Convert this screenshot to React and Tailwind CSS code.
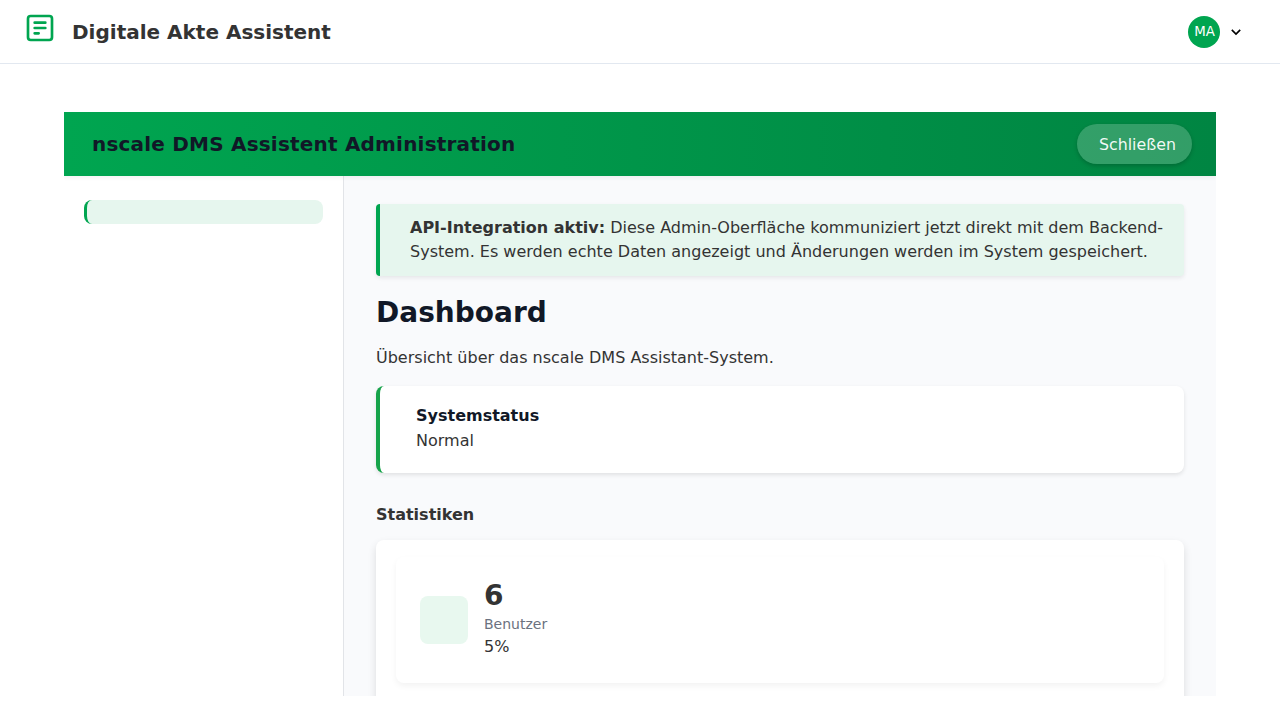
import React from 'react';

function LogoIcon() {
  return (
    <svg
      className="-mt-2 h-8 w-8 shrink-0"
      viewBox="0 0 24 24"
      fill="none"
      stroke="#00a550"
      strokeWidth="2"
      strokeLinecap="round"
      strokeLinejoin="round"
    >
      <rect x="3" y="3" width="18" height="18" rx="2" />
      <path d="M8 8h8M8 12h8M8 16h3" />
    </svg>
  );
}

function TopBar() {
  return (
    <header className="flex h-16 shrink-0 items-center justify-between border-b border-[#e2e8f0] bg-white px-6">
      <div className="flex items-center gap-4">
        <LogoIcon />
        <h1 className="text-xl font-semibold leading-7">Digitale Akte Assistent</h1>
      </div>
      <button className="flex items-center gap-2 pr-3">
        <span className="flex h-8 w-8 items-center justify-center rounded-full bg-[#00a550] pl-px text-[13.333px] text-white">
          MA
        </span>
        <svg
          className="h-4 w-4"
          viewBox="0 0 24 24"
          fill="none"
          stroke="#000000"
          strokeWidth="2.5"
          strokeLinecap="butt"
          strokeLinejoin="miter"
        >
          <path d="m5.7 8.9 6.3 6.1 6.3-6.1" />
        </svg>
      </button>
    </header>
  );
}

function AdminHeader() {
  return (
    <div className="relative z-10 flex h-16 shrink-0 items-center justify-between bg-linear-90 from-[#00a550] to-[#008542] pl-7 pr-6 shadow-[0_2px_4px_rgba(0,0,0,0.05)]">
      <h2 className="text-xl font-semibold tracking-[0.2px] text-[#111827]">nscale DMS Assistent Administration</h2>
      <button className="flex h-10 w-[115px] items-center rounded-full bg-white/20 pl-[22px] pt-px text-[15.8px] text-white/95 shadow-[0_2px_4px_rgba(0,0,0,0.2)]">
        Schließen
      </button>
    </div>
  );
}

function Sidebar() {
  return (
    <nav className="w-[280px] shrink-0 border-r border-[#e2e4e8] bg-white px-5 py-6">
      <div className="h-6 rounded-lg border-l-3 border-[#00a550] bg-[#e6f6ee]" />
    </nav>
  );
}

function Dashboard() {
  return (
    <main className="flex-1 overflow-hidden bg-[#f9fafc] px-8 pt-7">
      <div className="rounded border-l-4 border-[#00a550] bg-[#e6f6ee] py-3 pl-[30px] pr-4 shadow-[0_2px_4px_rgba(0,0,0,0.08)]">
        <strong className="font-bold">API-Integration aktiv:</strong> Diese Admin-Oberfläche kommuniziert jetzt
        direkt mit dem Backend-System. Es werden echte Daten angezeigt und Änderungen werden im System gespeichert.
      </div>
      <h2 className="mt-[17px] text-[28px] font-semibold leading-[39px] text-[#111827]">Dashboard</h2>
      <p className="mt-3.5">Übersicht über das nscale DMS Assistant-System.</p>
      <section className="mt-4 h-[87px] rounded-lg border-l-4 border-[#16a34a] bg-white pl-9 pt-[18px] shadow-[0_2px_4px_rgba(0,0,0,0.1)]">
        <h3 className="font-semibold text-[#111827]">Systemstatus</h3>
        <p className="mt-px">Normal</p>
      </section>
      <h3 className="mt-[30px] font-semibold">Statistiken</h3>
      <section className="mt-[13px] h-[400px] rounded-lg bg-white p-5 pt-[17px] shadow-[0_4px_8px_rgba(0,0,0,0.12)]">
        <div className="flex h-[126px] items-center gap-4 rounded-lg px-6 shadow-[0_3px_6px_rgba(0,0,0,0.05)]">
          <div className="h-12 w-12 rounded-lg bg-[#e8f8ef]" />
          <div className="pb-0.5">
            <div className="text-[28px] font-bold leading-[34px]">6</div>
            <div className="mt-px text-sm leading-[21px] text-[#6b7280]">Benutzer</div>
            <div>5%</div>
          </div>
        </div>
      </section>
    </main>
  );
}

export default function App() {
  return (
    <div className="flex h-screen flex-col bg-white font-['DejaVu_Sans',sans-serif] text-base text-[#333333]">
      <TopBar />
      <div className="mx-16 mb-6 mt-12 flex min-h-0 flex-1 flex-col overflow-hidden">
        <AdminHeader />
        <div className="flex min-h-0 flex-1">
          <Sidebar />
          <Dashboard />
        </div>
      </div>
    </div>
  );
}
